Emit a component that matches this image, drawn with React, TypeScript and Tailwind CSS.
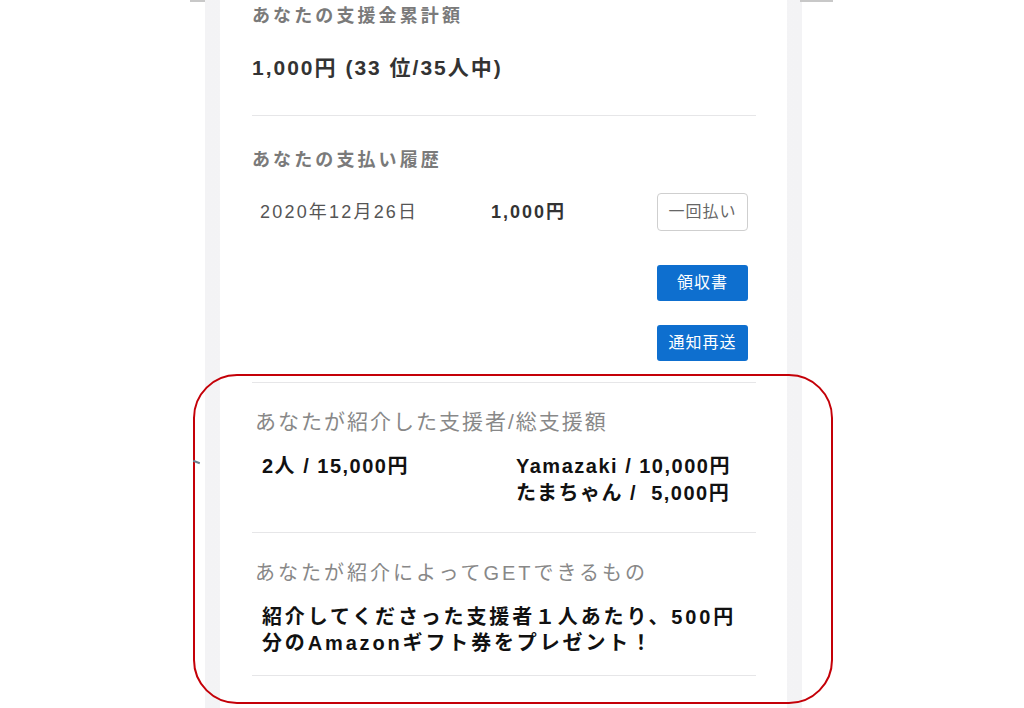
import React from "react";

const FONT = { fontFamily: '"Liberation Sans", "Noto Sans CJK JP", sans-serif' };

export default function App() {
  return (
    <div className="relative w-[1024px] h-[708px] overflow-hidden bg-white" style={FONT}>
      {/* top short lines */}
      <div className="absolute left-[190px] top-0 w-[15px] h-[2px] bg-[#c8c8c8]" />
      <div className="absolute left-[800px] top-0 w-[33px] h-[2px] bg-[#c8c8c8]" />

      <div className="ml-[205px] w-[597px] h-[708px] bg-gradient-to-r from-[#f3f3f5] via-[#f7f7f8] to-[#f3f3f5] px-[15px]">
        <div className="h-full bg-white pl-[32px] pr-[31px] pt-[4px]">
          <div className="text-[18px] leading-[25px] font-bold text-[#7a7a7a] tracking-[3.1px]">
            あなたの支援金累計額
          </div>
          <div className="mt-[25px] text-[21px] leading-[28px] font-bold text-[#333] tracking-[2px]">
            1,000円 (33 位/35人中)
          </div>
          <div className="mt-[33px] h-[1px] bg-[#e6e6e8]" />

          <div className="mt-[32px] text-[18px] leading-[24px] font-bold text-[#7a7a7a] tracking-[3.1px]">
            あなたの支払い履歴
          </div>
          <div className="mt-[21px] h-[38px] flex items-center">
            <div className="ml-[8px] w-[231px] text-[18px] text-[#555] tracking-[2.2px]">2020年12月26日</div>
            <div className="text-[18px] font-bold text-[#333] tracking-[2px]">1,000円</div>
            <div className="ml-auto mr-[8px] w-[91px] h-[38px] flex items-center justify-center border border-[#cfcfcf] rounded-[4px] text-[16px] text-[#666] tracking-[1px]">
              一回払い
            </div>
          </div>
          <div className="mt-[34px] flex justify-end">
            <div className="mr-[8px] w-[91px] h-[36px] flex items-center justify-center rounded-[3px] bg-[#0e6fcf] text-white text-[16px] tracking-[1px]">
              領収書
            </div>
          </div>
          <div className="mt-[24px] flex justify-end">
            <div className="mr-[8px] w-[91px] h-[36px] flex items-center justify-center rounded-[3px] bg-[#0e6fcf] text-white text-[16px] tracking-[1px]">
              通知再送
            </div>
          </div>
          <div className="mt-[21px] h-[1px] bg-[#e6e6e8]" />

          <div className="mt-[26px] ml-[3px] text-[21px] leading-[26px] text-[#888] tracking-[2px]">
            あなたが紹介した支援者/総支援額
          </div>
          <div className="mt-[18px] ml-[10px] grid grid-cols-[254px_1fr] text-[20px] leading-[27px] font-bold text-[#111] tracking-[1.5px]">
            <div>2人 / 15,000円</div>
            <div>
              <div>Yamazaki / 10,000円</div>
              <div>たまちゃん /&nbsp; 5,000円</div>
            </div>
          </div>
          <div className="mt-[25px] h-[1px] bg-[#e6e6e8]" />

          <div className="mt-[27px] ml-[3px] text-[20px] leading-[26px] text-[#888] tracking-[3px]">
            あなたが紹介によってGETできるもの
          </div>
          <div className="mt-[18px] ml-[10px] text-[20px] leading-[26px] font-bold text-[#111] tracking-[2.85px]">
            <div>紹介してくださった支援者１人あたり、500円</div>
            <div>分のAmazonギフト券をプレゼント！</div>
          </div>
          <div className="mt-[19px] h-[1px] bg-[#e6e6e8]" />
        </div>
      </div>

      {/* red highlight frame */}
      <div className="absolute left-[193px] top-[374px] w-[640px] h-[330px] rounded-[44px] border-2 border-[#c40008]" />
      <div className="absolute left-[193px] top-[461px] w-[7px] h-[2px] bg-[#6a8090] rotate-[20deg]" />
    </div>
  );
}
